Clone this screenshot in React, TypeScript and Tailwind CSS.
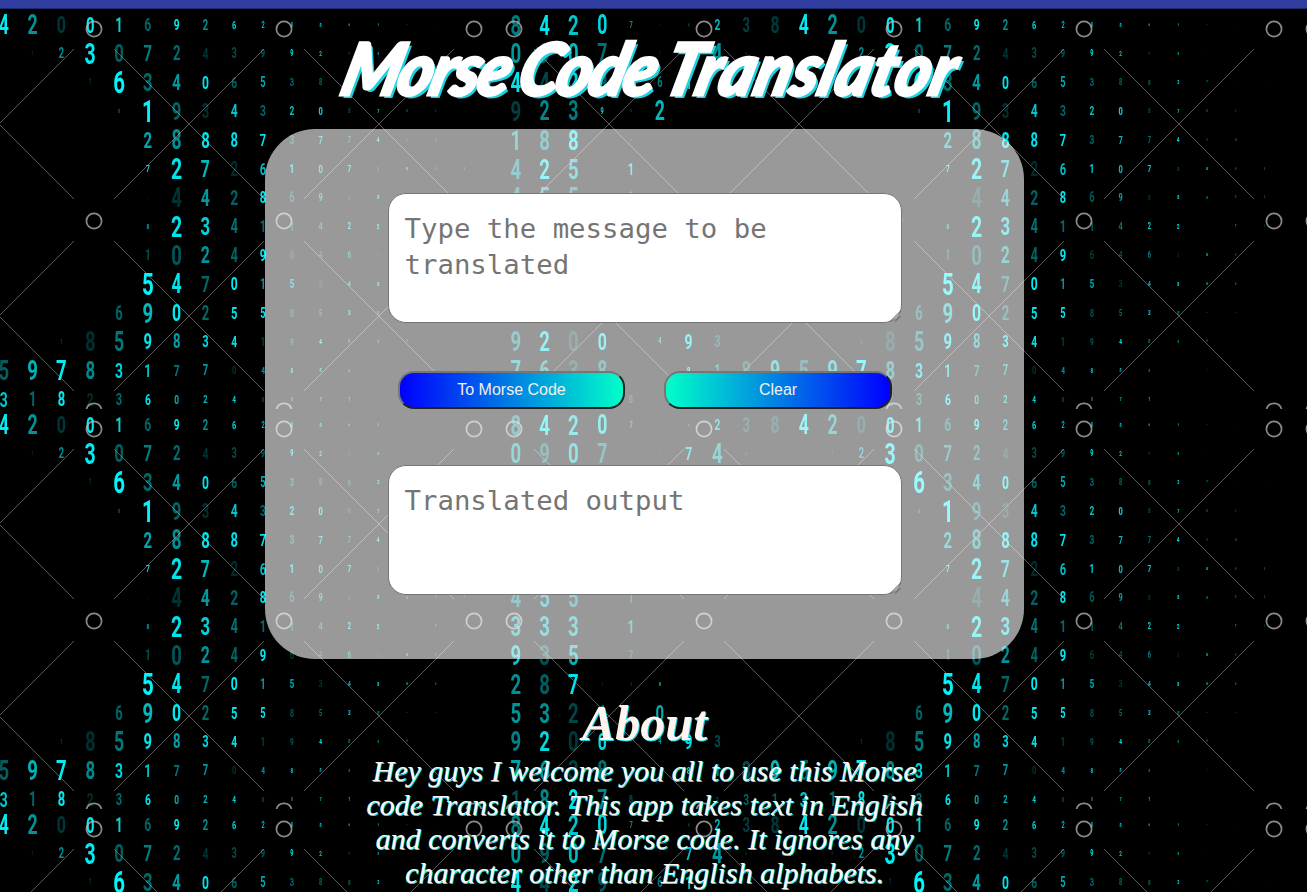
import React from "react";

// One entry per digit: column, glyph, cap height in px, brightness (0-99).
type Digit = [number, string, number, number];

const ROWS: Digit[][] = [
  [[0,"8",20,50],[1,"4",20,92],[2,"2",20,80],[3,"0",19,88],[4,"7",6,60],[5,"-",3,30],[6,"4",4,30],[7,"2",11,75],[8,"3",14,25],[9,"8",17,22],[10,"4",19,95],[11,"2",19,60],[12,"0",17,22],[13,"0",16,95],[14,"1",14,85],[15,"6",13,40],[16,"9",11,95],[17,"2",10,60],[18,"6",8,85],[19,"2",6,75],[20,"8",5,70],[21,"8",4,85],[22,"6",3,80],[23,"8",2,70],[24,"-",3,50],[25,"-",2,15]],
  [[0,"0",20,62],[1,"9",20,38],[2,"0",20,75],[3,"7",19,45],[5,"1",4,15],[6,"7",13,80],[7,"4",20,60],[8,"8",3,25],[11,"1",4,20],[12,"2",10,58],[13,"3",21,95],[14,"0",18,38],[15,"7",16,50],[16,"2",14,45],[17,"4",11,20],[18,"3",10,30],[19,"9",8,38],[20,"9",6,95],[21,"2",5,85],[22,"6",4,20],[23,"8",3,70],[24,"-",2,25]],
  [[0,"4",20,92],[1,"4",20,28],[2,"2",20,85],[3,"9",19,35],[5,"6",10,50],[6,"1",13,85],[13,"1",6,18],[14,"6",22,99],[15,"3",18,42],[16,"4",16,62],[17,"0",13,92],[18,"6",11,40],[19,"5",10,70],[20,"3",8,42],[21,"8",6,40],[22,"8",5,42],[23,"3",4,90],[24,"7",2,80],[25,"-",2,25],[26,"-",2,25]],
  [[0,"9",20,25],[1,"2",19,55],[2,"3",19,50],[3,"9",6,90],[4,"8",3,30],[5,"2",19,75],[14,"8",4,40],[15,"1",22,98],[16,"9",18,40],[17,"3",14,20],[18,"4",13,80],[19,"3",11,42],[20,"2",9,80],[21,"0",8,90],[22,"8",5,30],[23,"7",4,90],[24,"8",3,40],[25,"8",2,35]],
  [[0,"1",20,62],[1,"8",20,52],[2,"8",20,92],[4,"8",3,20],[15,"2",16,68],[16,"8",19,58],[17,"8",16,92],[18,"8",14,90],[19,"7",12,92],[20,"3",9,42],[21,"7",8,75],[22,"7",6,45],[23,"4",5,90],[24,"8",3,30],[25,"8",3,40]],
  [[0,"4",20,52],[1,"2",20,90],[2,"5",20,70],[4,"1",12,80],[15,"7",7,90],[16,"2",21,92],[17,"7",17,75],[18,"2",14,18],[19,"6",12,75],[20,"1",9,88],[21,"0",8,80],[22,"7",7,85],[23,"8",4,30],[24,"8",3,95],[25,"8",2,55],[26,"8",2,45]],
  [[0,"4",20,48],[1,"5",20,65],[2,"5",20,52],[4,"1",12,35],[15,"1",3,15],[16,"4",20,20],[17,"4",17,62],[18,"2",15,40],[19,"8",12,92],[20,"6",10,35],[21,"9",8,65],[22,"8",5,20],[23,"8",4,95],[24,"8",3,60],[25,"8",2,55],[26,"8",2,35]],
  [[0,"3",20,65],[1,"3",20,70],[2,"3",20,68],[4,"1",13,62],[15,"8",5,70],[16,"2",21,92],[17,"3",18,85],[18,"4",14,45],[19,"1",12,42],[20,"1",9,40],[21,"4",8,45],[22,"2",6,90],[23,"2",5,90],[25,"7",2,95],[26,"8",2,20]],
  [[0,"9",20,80],[1,"3",20,32],[2,"5",20,70],[4,"7",9,30],[15,"1",10,32],[16,"0",20,35],[17,"2",17,60],[18,"4",14,40],[19,"9",12,95],[20,"6",9,22],[21,"4",7,30],[22,"6",6,55],[23,"2",4,20],[24,"8",3,90],[25,"8",2,50]],
  [[0,"2",20,58],[1,"8",20,38],[2,"7",20,92],[3,"1",4,20],[4,"1",4,30],[5,"9",4,90],[15,"5",22,99],[16,"4",19,92],[17,"7",16,42],[18,"0",13,95],[19,"1",11,60],[20,"5",9,65],[21,"3",7,20],[22,"4",5,75],[23,"8",4,95],[24,"8",3,80],[25,"8",2,65]],
  [[0,"5",20,60],[1,"3",20,58],[2,"2",20,28],[3,"1",16,60],[5,"0",16,70],[14,"6",14,40],[15,"9",20,75],[16,"0",17,95],[17,"2",14,42],[18,"5",12,92],[19,"5",10,92],[20,"8",8,30],[21,"5",6,45],[22,"3",5,85],[23,"8",4,55],[24,"-",3,60],[25,"-",3,60]],
  [[0,"9",20,52],[1,"2",20,88],[2,"0",20,22],[3,"0",17,90],[5,"4",6,65],[6,"9",15,92],[7,"3",12,30],[12,"1",5,25],[13,"8",20,18],[14,"5",19,48],[15,"9",16,92],[16,"8",14,65],[17,"3",12,88],[18,"4",11,92],[19,"1",9,25],[20,"9",7,35],[21,"4",5,99],[22,"8",4,55],[23,"8",3,60],[24,"8",2,60]],
  [[0,"7",20,65],[1,"6",20,60],[2,"3",20,25],[3,"8",19,45],[6,"8",7,92],[7,"1",12,50],[8,"8",18,30],[9,"9",19,75],[10,"5",20,38],[11,"9",20,72],[12,"7",20,96],[13,"8",18,55],[14,"3",15,85],[15,"1",13,80],[16,"7",11,48],[17,"7",10,62],[18,"0",8,20],[19,"4",7,60],[20,"8",5,85],[21,"8",4,80],[22,"8",3,60],[24,"-",2,55],[25,"-",2,35]],
  [[0,"1",18,32],[1,"8",19,55],[2,"2",19,92],[3,"7",19,55],[4,"8",8,30],[7,"5",4,35],[8,"3",11,40],[9,"1",12,35],[10,"3",15,80],[11,"1",14,42],[12,"8",14,95],[13,"2",13,18],[14,"3",12,42],[15,"6",11,92],[16,"0",9,70],[17,"2",8,75],[18,"4",7,85],[19,"8",5,30],[20,"8",4,55],[21,"7",4,80],[22,"1",4,75]],
];

const RINGS = [10, 200, 390, 580, 770];
const CROSSES = [105, 295, 485, 675];

function Tile() {
  return (
    <>
      {ROWS.map((row, r) =>
        row.map(([col, glyph, cap, light]) => (
          <text
            key={r + "-" + col}
            transform={`translate(${11.8 + col * 28.8} ${15.5 + r * 28.81 + cap / 2}) scale(0.66 1)`}
            fontSize={cap / 0.711}
            opacity={light / 100}
            textAnchor="middle"
          >
            {glyph}
          </text>
        ))
      )}
      <g fill="none" stroke="#bdb6b8" strokeWidth="1.7" opacity="0.75">
        {RINGS.map((x) => (
          <g key={x}>
            <circle cx={x} cy="20" r="7.6" />
            <circle cx={x} cy="212" r="7.6" />
            <path d={`M${x - 7.5} 400a7.8 7.8 0 0 1 15 0`} />
          </g>
        ))}
      </g>
      <g stroke="#b8b0b2" strokeWidth="1" opacity="0.5">
        {CROSSES.map((x) => (
          <path key={x} d={`M${x - 75} 40l150 150m0-150l-150 150M${x - 75} 232l150 150m0-150l-150 150`} />
        ))}
      </g>
    </>
  );
}

function Backdrop() {
  return (
    <svg className="absolute inset-0 h-full w-full" viewBox="0 0 1307 892" aria-hidden="true">
      <defs>
        <pattern id="rain" x="-296" y="9" width="800" height="400" patternUnits="userSpaceOnUse">
          <g fill="#00f8ff" fontFamily="Roboto, sans-serif" fontWeight="700">
            <Tile />
          </g>
        </pattern>
      </defs>
      <rect y="9" width="1307" height="883" fill="url(#rain)" />
    </svg>
  );
}

function MessageArea({ placeholder }: { placeholder: string }) {
  return (
    <div className="relative">
      <textarea
        className="block h-[130px] w-[514px] resize-none overflow-auto rounded-[18px] border border-[#767676] bg-white px-4 py-[17px] font-['DejaVu_Sans_Mono',monospace] text-[27.35px] leading-9 text-black outline-none placeholder:text-[#757575] placeholder:opacity-100"
        placeholder={placeholder}
      />
      <svg className="pointer-events-none absolute right-px bottom-px h-3 w-3" viewBox="0 0 12 12" fill="none" stroke="#555">
        <path d="M1 11.5L11.5 1M6 11.5L11.5 6" />
      </svg>
    </div>
  );
}

const buttonClass =
  "h-[38px] rounded-[16px] border-[2.5px] border-t-[#767676] border-l-[#767676] border-r-[#212121] border-b-[#212121] pb-px text-base text-[#f5eeee] font-['Liberation_Sans',Arial,sans-serif]";

export default function App() {
  return (
    <div className="relative flex h-[892px] w-full flex-col overflow-hidden bg-black">
      <Backdrop />
      <div className="relative h-[9px] shrink-0 border-b border-[#20286c] bg-[#303f9f]" />
      <main className="relative flex w-[1289px] flex-col items-center">
        <h1 className="flex h-[120px] w-full items-start justify-center pt-3 pl-[14px] font-['Lato',sans-serif] text-[72px] leading-[92px] font-black whitespace-nowrap text-white italic">
          <span className="inline-block origin-center [transform:scaleX(0.918)_skewX(-16deg)] tracking-[-2px] [word-spacing:-2px] [-webkit-text-stroke:3px_white] [text-shadow:4px_3px_0_#1cd3e2]">
            Morse Code <span className="tracking-[0.6px]">Translator</span>
          </span>
        </h1>
        <section className="flex h-[530px] w-[759px] flex-col items-center rounded-[50px] bg-white/60 pt-16">
          <MessageArea placeholder="Type the message to be translated" />
          <div className="mt-12 mb-14 flex gap-[39px] pl-px">
            <button className={buttonClass + " w-[227px] bg-[linear-gradient(90deg,#0000ff,#00ffc8)]"}>
              To Morse Code
            </button>
            <button className={buttonClass + " w-[228px] bg-[linear-gradient(90deg,#00ffc8,#0000ff)]"}>
              Clear
            </button>
          </div>
          <MessageArea placeholder="Translated output" />
        </section>
        <section className="flex w-[600px] flex-col items-center pt-9 text-center font-['Liberation_Serif','Times_New_Roman',serif] text-[#fff5ee] italic">
          <h2 className="text-[50px] leading-[56px] font-bold [text-shadow:1px_1px_0_#12d8e4]">About</h2>
          <p className="mt-[3px] text-[30px] leading-[34px] whitespace-nowrap [text-shadow:1px_1px_0_#00f0ff]">
            Hey guys I welcome you all to use this Morse
            <br />
            code Translator. This app takes text in English
            <br />
            and converts it to Morse code. It ignores any
            <br />
            character other than English alphabets.
          </p>
        </section>
      </main>
    </div>
  );
}
